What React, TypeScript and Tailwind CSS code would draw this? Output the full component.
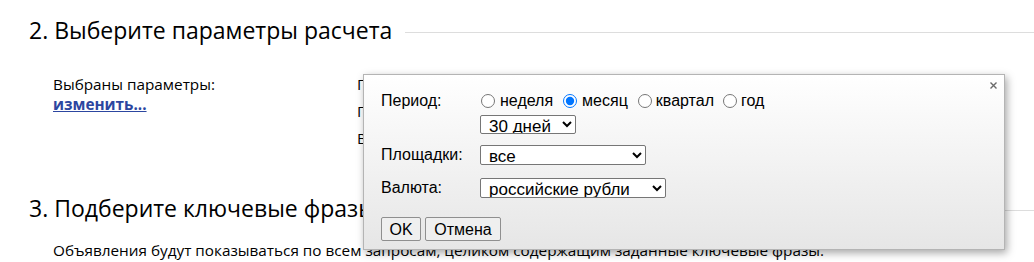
export default function App() {
  return (
    <div className="relative h-[262px] w-[1034px] overflow-hidden bg-white font-['Open_Sans',sans-serif] text-black">
      {/* Section 2 */}
      <div className="pt-[12px]">
        <div className="flex items-center pl-[29px]">
          <h2 className="whitespace-nowrap text-[23px] leading-[36px]">2. Выберите параметры расчета</h2>
          <div className="ml-[13px] mt-[4px] h-px flex-1 bg-[#dddddd]" />
        </div>

        <div className="mt-[26px] grid grid-cols-[304px_1fr] pl-[53px] text-[15.3px] leading-[20px]">
          <div>
            <div>Выбраны параметры:</div>
            <a href="#" className="font-bold text-[#2c46a0] underline">изменить...</a>
          </div>
          <div className="flex flex-col gap-[7px]">
            <div>Период: месяц, 30 дней</div>
            <div>Площадки: все</div>
            <div>Валюта: российские рубли</div>
          </div>
        </div>
      </div>

      {/* Section 3 */}
      <div className="mt-[42px]">
        <div className="flex items-center pl-[29px]">
          <h2 className="whitespace-nowrap text-[23px] leading-[36px]">3. Подберите ключевые фразы</h2>
          <div className="ml-[13px] mt-[4px] h-px flex-1 bg-[#dddddd]" />
        </div>
        <p className="mt-[14px] pl-[53px] text-[15.3px] leading-[20px]">
          Объявления будут показываться по всем запросам, целиком содержащим заданные ключевые фразы.
        </p>
      </div>

      {/* Settings popup */}
      <div className="absolute left-[363px] top-[74px] h-[176px] w-[642px] border border-[#b4b4b4] bg-linear-to-b from-white to-[#e6e6e6] pl-[17px] pt-[15px] font-['Liberation_Sans',Arial,sans-serif] text-[16px] shadow-[2px_3px_8px_rgba(0,0,0,0.35)]">
        <svg className="absolute right-[7px] top-[7px]" width="7" height="7" viewBox="0 0 7 7">
          <path d="M0.5 0.5L6.5 6.5M6.5 0.5L0.5 6.5" stroke="#6a6a6a" strokeWidth="1.4" />
        </svg>

        <div className="flex">
          <div className="w-[99px] leading-[22px]">Период:</div>
          <div className="flex flex-col">
            <div className="flex h-[22px] items-center gap-[10px]">
              <label className="flex items-center">
                <input type="radio" name="period" className="m-0 ml-[1px] h-[14px] w-[14px]" />
                <span className="ml-[5px]">неделя</span>
              </label>
              <label className="flex items-center">
                <input type="radio" name="period" defaultChecked className="m-0 h-[14px] w-[14px]" />
                <span className="ml-[5px]">месяц</span>
              </label>
              <label className="flex items-center">
                <input type="radio" name="period" className="m-0 h-[14px] w-[14px]" />
                <span className="ml-[4px]">квартал</span>
              </label>
              <label className="flex items-center">
                <input type="radio" name="period" className="m-0 ml-[-1px] h-[14px] w-[14px]" />
                <span className="ml-[4px]">год</span>
              </label>
            </div>
            <select defaultValue="30" className="mt-[3px] h-[19px] w-[96px] rounded-[2px] border border-[#767676] bg-white pl-[4px] text-[17px]">
              <option value="7">7 дней</option>
              <option value="30">30 дней</option>
              <option value="90">90 дней</option>
            </select>
          </div>
        </div>

        <div className="mt-[9px] flex items-center">
          <div className="w-[99px]">Площадки:</div>
          <select className="h-[20px] w-[166px] rounded-[2px] border border-[#767676] bg-white pl-[4px] text-[17px]">
            <option>все</option>
            <option>поиск</option>
            <option>сети</option>
          </select>
        </div>

        <div className="mt-[9px] flex items-center">
          <div className="w-[99px]">Валюта:</div>
          <select className="h-[20px] w-[186px] rounded-[2px] border border-[#767676] bg-white pl-[4px] text-[17px]">
            <option>российские рубли</option>
            <option>условные единицы</option>
          </select>
        </div>

        <div className="mt-[17px] flex gap-[4px]">
          <button className="h-[24px] w-[40px] rounded-[2px] border border-[#8f8f8f] bg-[#efefef]">OK</button>
          <button className="h-[24px] w-[76px] rounded-[2px] border border-[#8f8f8f] bg-[#efefef]">Отмена</button>
        </div>
      </div>
    </div>
  );
}
